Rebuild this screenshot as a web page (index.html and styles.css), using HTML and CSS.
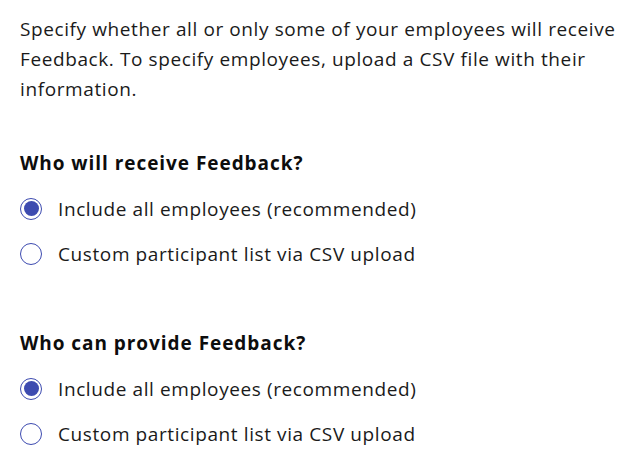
FILE: index.html
```html
<!DOCTYPE html>
<html>
<head>
<meta charset="utf-8">
<link rel="stylesheet" href="styles.css">
</head>
<body>
<div class="page">
  <p class="intro">Specify whether all or only some of your employees will receive Feedback. To specify employees, upload a CSV file with their information.</p>
  <section class="group">
    <h3 class="heading">Who will receive Feedback?</h3>
    <div class="option"><span class="radio checked"></span><span class="label">Include all employees (recommended)</span></div>
    <div class="option"><span class="radio"></span><span class="label">Custom participant list via CSV upload</span></div>
  </section>
  <section class="group">
    <h3 class="heading">Who can provide Feedback?</h3>
    <div class="option"><span class="radio checked"></span><span class="label">Include all employees (recommended)</span></div>
    <div class="option"><span class="radio"></span><span class="label">Custom participant list via CSV upload</span></div>
  </section>
</div>
</body>
</html>
```
FILE: styles.css
```css
html, body { margin: 0; padding: 0; background: #fff; }
body { font-family: "Open Sans", "Lato", sans-serif; color: #1a1a1a; }
.page { padding: 14px 8px 0 20px; }
.intro { margin: 0; font-size: 19px; line-height: 30px; letter-spacing: 0.6px; }
.group { margin-top: 46px; }
.group + .group { margin-top: 54px; }
.heading { margin: 0 0 10px 0; font-size: 19px; font-weight: 700; line-height: 26px; color: #0d0d0d; letter-spacing: 0.95px; }
.option { display: flex; align-items: center; height: 45px; }
.radio { box-sizing: border-box; width: 22px; height: 22px; border-radius: 50%; border: 1.5px solid #3d4bb0; background: #fff; flex: none; display: flex; align-items: center; justify-content: center; }
.radio.checked::after { content: ""; width: 15px; height: 15px; border-radius: 50%; background: #3d4bb0; }
.label { margin-left: 16px; font-size: 19px; letter-spacing: 0.6px; }
```
